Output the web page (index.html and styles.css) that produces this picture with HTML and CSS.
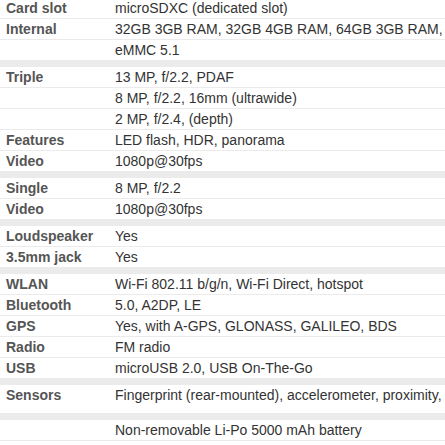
FILE: index.html
```html
<!DOCTYPE html>
<html lang="en">
<head>
<meta charset="utf-8">
<title>Specs</title>
<link rel="stylesheet" href="styles.css">
</head>
<body>
<div class="specs">
  <div class="group first">
    <div class="row"><div class="ttl">Card slot</div><div class="nfo">microSDXC (dedicated slot)</div></div>
    <div class="row"><div class="ttl">Internal</div><div class="nfo">32GB 3GB RAM, 32GB 4GB RAM, 64GB 3GB RAM,</div></div>
    <div class="row"><div class="ttl"></div><div class="nfo">eMMC 5.1</div></div>
  </div>
  <div class="group">
    <div class="row"><div class="ttl">Triple</div><div class="nfo">13 MP, f/2.2, PDAF</div></div>
    <div class="row"><div class="ttl"></div><div class="nfo">8 MP, f/2.2, 16mm (ultrawide)</div></div>
    <div class="row"><div class="ttl"></div><div class="nfo">2 MP, f/2.4, (depth)</div></div>
    <div class="row"><div class="ttl">Features</div><div class="nfo">LED flash, HDR, panorama</div></div>
    <div class="row"><div class="ttl">Video</div><div class="nfo">1080p@30fps</div></div>
  </div>
  <div class="group">
    <div class="row"><div class="ttl">Single</div><div class="nfo">8 MP, f/2.2</div></div>
    <div class="row"><div class="ttl">Video</div><div class="nfo">1080p@30fps</div></div>
  </div>
  <div class="group">
    <div class="row"><div class="ttl">Loudspeaker</div><div class="nfo">Yes</div></div>
    <div class="row"><div class="ttl">3.5mm jack</div><div class="nfo">Yes</div></div>
  </div>
  <div class="group">
    <div class="row"><div class="ttl">WLAN</div><div class="nfo">Wi-Fi 802.11 b/g/n, Wi-Fi Direct, hotspot</div></div>
    <div class="row"><div class="ttl">Bluetooth</div><div class="nfo">5.0, A2DP, LE</div></div>
    <div class="row"><div class="ttl">GPS</div><div class="nfo">Yes, with A-GPS, GLONASS, GALILEO, BDS</div></div>
    <div class="row"><div class="ttl">Radio</div><div class="nfo">FM radio</div></div>
    <div class="row"><div class="ttl">USB</div><div class="nfo">microUSB 2.0, USB On-The-Go</div></div>
  </div>
  <div class="group">
    <div class="row tall"><div class="ttl">Sensors</div><div class="nfo">Fingerprint (rear-mounted), accelerometer, proximity,</div></div>
  </div>
  <div class="group">
    <div class="row"><div class="ttl"></div><div class="nfo">Non-removable Li-Po 5000 mAh battery</div></div>
  </div>
</div>
</body>
</html>
```

FILE: styles.css
```css
html, body {
  margin: 0;
  padding: 0;
  background: #ffffff;
  overflow: hidden;
}

body {
  width: 445px;
  height: 445px;
  font-family: "Liberation Sans", Arial, sans-serif;
  font-size: 14px;
}

.specs {
  display: flex;
  flex-direction: column;
  gap: 6px;
  background: #ebebeb;
}

.group {
  display: flex;
  flex-direction: column;
  background: #ffffff;
}

.group.first {
  margin-top: -2px;
}

.row {
  display: grid;
  grid-template-columns: 115px 1fr;
  height: 20px;
  line-height: 20px;
  border-bottom: 1px solid #ebebeb;
  white-space: nowrap;
  overflow: hidden;
}

.row.tall {
  height: 28px;
}

.ttl {
  padding-left: 6px;
  font-weight: bold;
  color: #555555;
}

.nfo {
  color: #333333;
}
```
